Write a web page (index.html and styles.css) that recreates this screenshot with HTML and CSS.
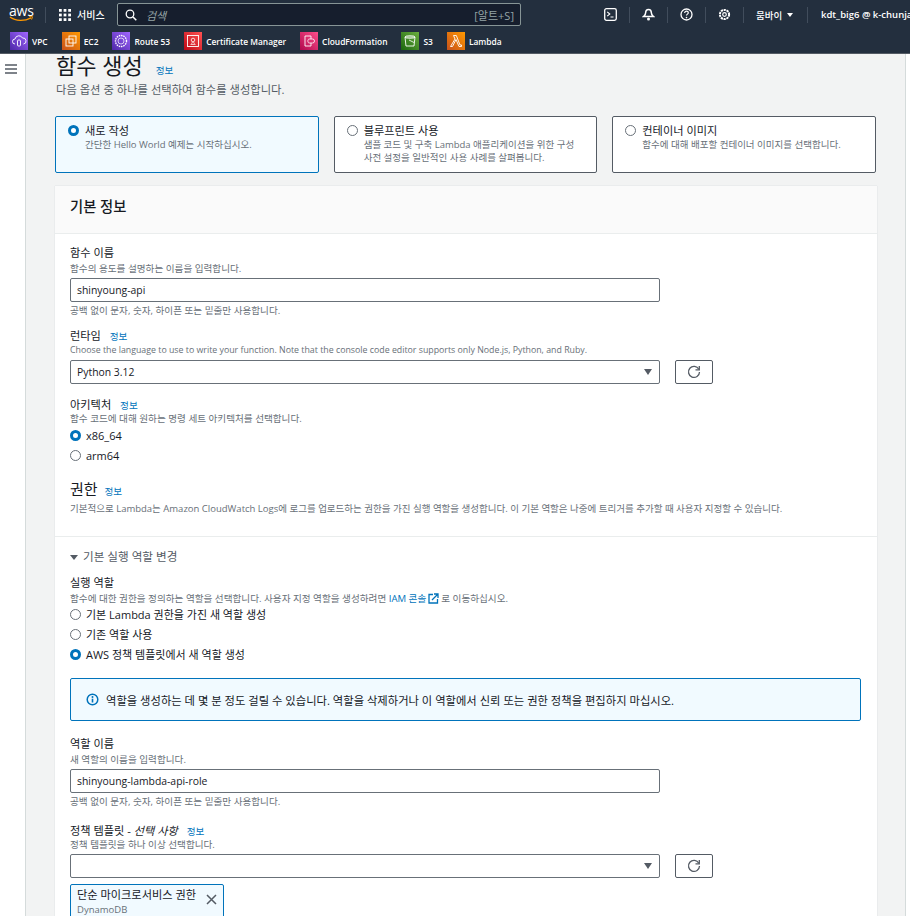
FILE: index.html
```html
<!DOCTYPE html>
<html lang="ko">
<head>
<meta charset="utf-8">
<title>함수 생성</title>
<link rel="stylesheet" href="styles.css">
</head>
<body>
<header class="console">
  <div class="topbar">
    <div class="logo"><span class="logo-text">aws</span><svg class="smile" viewBox="0 0 26 6" width="25" height="6"><path d="M1 1c6 4.500 15 4.500 22 .8" fill="none" stroke="#f90" stroke-width="1.300"/><path d="M21 .4l3.500 .2-1 3" fill="none" stroke="#f90" stroke-width="1"/></svg></div>
    <span class="sep logo-sep"></span>
    <div class="services">
      <svg class="grid-ic" viewBox="0 0 13 13" width="12" height="12"><g fill="#fff"><rect width="3" height="3"/><rect x="5" width="3" height="3"/><rect x="10" width="3" height="3"/><rect y="5" width="3" height="3"/><rect x="5" y="5" width="3" height="3"/><rect x="10" y="5" width="3" height="3"/><rect y="10" width="3" height="3"/><rect x="5" y="10" width="3" height="3"/><rect x="10" y="10" width="3" height="3"/></g></svg>
      <span>서비스</span>
    </div>
    <div class="search">
      <svg viewBox="0 0 12 12" width="12" height="12"><circle cx="5" cy="5" r="3.800" fill="none" stroke="#fff" stroke-width="1.300"/><path d="M8 8l3.300 3.300" stroke="#fff" stroke-width="1.500"/></svg>
      <em>검색</em>
      <span class="shortcut">[알트+S]</span>
    </div>
    <div class="tools">
      <span class="tool"><svg viewBox="0 0 13 13" width="13" height="13"><rect x=".7" y=".7" width="11.600" height="11.600" rx="1.800" fill="none" stroke="#fff" stroke-width="1.300"/><path d="M3.200 3.800L5.800 6 3.200 8.200" fill="none" stroke="#fff" stroke-width="1.100"/><path d="M6.500 9h3" stroke="#fff" stroke-width="1"/></svg></span>
      <span class="sep"></span>
      <span class="tool"><svg viewBox="0 0 13 13" width="13" height="13"><path d="M6.500 1.500c2 0 2.800 1.400 2.800 3.100 0 1.800 .8 3 2.200 4H1.500c1.400-1 2.200-2.200 2.200-4 0-1.700 .8-3.100 2.800-3.100z" fill="none" stroke="#fff" stroke-width="1.500"/><circle cx="6.500" cy="11" r="1.500" fill="#fff"/></svg></span>
      <span class="sep"></span>
      <span class="tool"><svg viewBox="0 0 13 13" width="13" height="13"><circle cx="6.500" cy="6.500" r="5.500" fill="none" stroke="#fff" stroke-width="1.300"/><path d="M4.700 5c0-1.200 .8-1.800 1.800-1.800s1.800 .7 1.800 1.600c0 1.300-1.800 1.400-1.800 2.800" fill="none" stroke="#fff" stroke-width="1.200"/><circle cx="6.500" cy="9.600" r=".8" fill="#fff"/></svg></span>
      <span class="sep"></span>
      <span class="tool"><svg viewBox="0 0 13 13" width="13" height="13"><circle cx="6.500" cy="6.500" r="4.600" fill="none" stroke="#fff" stroke-width="2" stroke-dasharray="2.200 .7"/><circle cx="6.500" cy="6.500" r="1.800" fill="none" stroke="#fff" stroke-width="1.200"/></svg></span>
      <span class="sep"></span>
      <span class="region">뭄바이<i class="caret"></i></span>
      <span class="sep"></span>
      <span class="account">kdt_big6 @ k-chunjae</span>
    </div>
  </div>
  <nav class="favorites">
    <span class="fav"><span class="svc purple"><svg viewBox="0 0 18 18" width="18" height="18"><path d="M5 12a2.500 2.500 0 0 1 0-5 4 4 0 0 1 7.500-1A3 3 0 0 1 13.500 12" fill="none" stroke="#fff" stroke-width=".9"/><rect x="7.500" y="8" width="3" height="6" rx="1" fill="none" stroke="#fff" stroke-width=".9"/></svg></span>VPC</span>
    <span class="fav"><span class="svc orange"><svg viewBox="0 0 18 18" width="18" height="18"><rect x="7" y="4" width="7" height="7" fill="none" stroke="#fff" stroke-width=".9"/><rect x="4" y="7" width="7" height="7" fill="none" stroke="#fff" stroke-width=".9"/></svg></span>EC2</span>
    <span class="fav"><span class="svc violet"><svg viewBox="0 0 18 18" width="18" height="18"><circle cx="9" cy="9" r="5.500" fill="none" stroke="#fff" stroke-width="1.400" stroke-dasharray="1.500 .8"/><circle cx="9" cy="9" r="3" fill="none" stroke="#fff" stroke-width=".7"/></svg></span>Route 53</span>
    <span class="fav"><span class="svc red"><svg viewBox="0 0 18 18" width="18" height="18"><rect x="3.500" y="3.500" width="11" height="11" fill="none" stroke="#fff" stroke-width=".9"/><circle cx="9" cy="8" r="1.800" fill="none" stroke="#fff" stroke-width=".8"/><path d="M6.500 12.500h5M7.500 12l1-2M10.500 12l-1-2" stroke="#fff" stroke-width=".7"/></svg></span>Certificate Manager</span>
    <span class="fav"><span class="svc pink"><svg viewBox="0 0 18 18" width="18" height="18"><path d="M5 4h6v3M5 4v10h6v-3" fill="none" stroke="#fff" stroke-width=".9"/><path d="M8 9a1.500 1.500 0 0 1 1.500-2h3a2 2 0 0 1 0 4H9.500A1.500 1.500 0 0 1 8 9z" fill="none" stroke="#fff" stroke-width=".8"/></svg></span>CloudFormation</span>
    <span class="fav"><span class="svc green"><svg viewBox="0 0 18 18" width="18" height="18"><path d="M4 5h10l-1 9H5z" fill="none" stroke="#fff" stroke-width=".9"/><ellipse cx="9" cy="5" rx="5" ry="1.300" fill="none" stroke="#fff" stroke-width=".8"/><path d="M8 8l5 2.500" stroke="#fff" stroke-width=".8"/></svg></span>S3</span>
    <span class="fav"><span class="svc amber"><svg viewBox="0 0 18 18" width="18" height="18"><path d="M3.500 14.500L8 7 6.500 3.500h2.800L13 13h1.500v1.500h-2.500L9 7.500 5.500 14.500z" fill="none" stroke="#fff" stroke-width=".9"/></svg></span>Lambda</span>
  </nav>
</header>

<div class="layout">
  <aside class="side">
    <svg viewBox="0 0 12 10" width="12" height="10"><path d="M0 1h12M0 5h12M0 9h12" stroke="#545b64" stroke-width="1.500"/></svg>
  </aside>

  <main class="main">
    <div class="title-row">
      <h1>함수 생성</h1><a class="info">정보</a>
    </div>
    <p class="lead">다음 옵션 중 하나를 선택하여 함수를 생성합니다.</p>

    <div class="choices">
      <div class="choice selected">
        <span class="radio on"></span>
        <div><div class="choice-title">새로 작성</div><div class="desc">간단한 Hello World 예제는 시작하십시오.</div></div>
      </div>
      <div class="choice">
        <span class="radio"></span>
        <div><div class="choice-title">블루프린트 사용</div><div class="desc">샘플 코드 및 구축 Lambda 애플리케이션을 위한 구성<br>사전 설정을 일반적인 사용 사례를 살펴봅니다.</div></div>
      </div>
      <div class="choice">
        <span class="radio"></span>
        <div><div class="choice-title">컨테이너 이미지</div><div class="desc">함수에 대해 배포할 컨테이너 이미지를 선택합니다.</div></div>
      </div>
    </div>

    <section class="panel">
      <div class="panel-head"><h2>기본 정보</h2></div>

      <div class="panel-body top-body">
        <div class="field">
          <div class="label">함수 이름</div>
          <div class="desc">함수의 용도를 설명하는 이름을 입력합니다.</div>
          <div class="input">shinyoung-api</div>
          <div class="desc hint">공백 없이 문자, 숫자, 하이픈 또는 밑줄만 사용합니다.</div>
        </div>
        <div class="field runtime">
          <div class="label">런타임 <a class="info">정보</a></div>
          <div class="desc desc-en">Choose the language to use to write your function. Note that the console code editor supports only Node.js, Python, and Ruby.</div>
          <div class="select-row">
            <div class="input select">Python 3.12<i class="tri"></i></div>
            <button class="refresh" type="button"><svg viewBox="0 0 14 14" width="14" height="14"><path d="M11.800 4.200A5.500 5.500 0 1 0 12.500 7" fill="none" stroke="#545b64" stroke-width="1.300"/><path d="M12.300 1v3.800H8.500" fill="none" stroke="#545b64" stroke-width="1.300"/></svg></button>
          </div>
        </div>
        <div class="field arch">
          <div class="label">아키텍처 <a class="info">정보</a></div>
          <div class="desc">함수 코드에 대해 원하는 명령 세트 아키텍처를 선택합니다.</div>
          <div class="radios arch-radios">
            <div class="opt"><span class="radio on"></span>x86_64</div>
            <div class="opt"><span class="radio"></span>arm64</div>
          </div>
        </div>
        <div class="perm">
          <h3>권한 <a class="info">정보</a></h3>
          <div class="desc">기본적으로 Lambda는 Amazon CloudWatch Logs에 로그를 업로드하는 권한을 가진 실행 역할을 생성합니다. 이 기본 역할은 나중에 트리거를 추가할 때 사용자 지정할 수 있습니다.</div>
        </div>
      </div>

      <div class="panel-body role-body">
        <div class="expander"><i class="tri"></i>기본 실행 역할 변경</div>
        <div class="field exec">
          <div class="label">실행 역할</div>
          <div class="desc">함수에 대한 권한을 정의하는 역할을 선택합니다. 사용자 지정 역할을 생성하려면 <a class="link">IAM 콘솔</a><svg class="ext" viewBox="0 0 11 11" width="11" height="11"><path d="M5 1.500H1v8.500h8.500V6" fill="none" stroke="#0073bb" stroke-width="1.300"/><path d="M4 7l5.500-5.500M6 1h4v4" fill="none" stroke="#0073bb" stroke-width="1.300"/></svg>로 이동하십시오.</div>
          <div class="radios exec-radios">
            <div class="opt"><span class="radio"></span>기본 Lambda 권한을 가진 새 역할 생성</div>
            <div class="opt"><span class="radio"></span>기존 역할 사용</div>
            <div class="opt"><span class="radio on"></span>AWS 정책 템플릿에서 새 역할 생성</div>
          </div>
        </div>
        <div class="alert">
          <svg viewBox="0 0 13 13" width="13" height="13"><circle cx="6.500" cy="6.500" r="5.300" fill="none" stroke="#0073bb" stroke-width="1.500"/><circle cx="6.500" cy="4" r="1" fill="#0073bb"/><rect x="5.700" y="5.700" width="1.600" height="3.800" fill="#0073bb"/></svg>
          <span>역할을 생성하는 데 몇 분 정도 걸릴 수 있습니다. 역할을 삭제하거나 이 역할에서 신뢰 또는 권한 정책을 편집하지 마십시오.</span>
        </div>
        <div class="field role-name">
          <div class="label">역할 이름</div>
          <div class="desc">새 역할의 이름을 입력합니다.</div>
          <div class="input">shinyoung-lambda-api-role</div>
          <div class="desc hint">공백 없이 문자, 숫자, 하이픈 또는 밑줄만 사용합니다.</div>
        </div>
        <div class="field policy">
          <div class="label">정책 템플릿 - <em>선택 사항</em> <a class="info">정보</a></div>
          <div class="desc">정책 템플릿을 하나 이상 선택합니다.</div>
          <div class="select-row">
            <div class="input select"><i class="tri"></i></div>
            <button class="refresh" type="button"><svg viewBox="0 0 14 14" width="14" height="14"><path d="M11.800 4.200A5.500 5.500 0 1 0 12.500 7" fill="none" stroke="#545b64" stroke-width="1.300"/><path d="M12.300 1v3.800H8.500" fill="none" stroke="#545b64" stroke-width="1.300"/></svg></button>
          </div>
          <div class="chip">
            <div><div class="chip-title">단순 마이크로서비스 권한</div><div class="chip-sub">DynamoDB</div></div>
            <svg viewBox="0 0 11 11" width="11" height="11"><path d="M1 1l9 9M10 1l-9 9" stroke="#545b64" stroke-width="1.500"/></svg>
          </div>
        </div>
      </div>
    </section>
  </main>
  <div class="rail"></div>
</div>
</body>
</html>
```
FILE: styles.css
```css
* { box-sizing: border-box; }
html, body { margin: 0; height: 916px; overflow: hidden; }
body {
  font-family: "Open Sans", "Noto Sans CJK KR", sans-serif;
  font-size: 11px;
  color: #16191f;
  background: #f2f3f3;
  display: flex;
  flex-direction: column;
}
a { color: #0073bb; }

.console { background: #232f3e; height: 54px; flex: none; border-bottom: 1px solid #545b64; color: #fff; }
.topbar { height: 29px; display: flex; align-items: center; }
.logo { width: 45px; padding-left: 9px; display: flex; flex-direction: column; height: 24px; }
.logo-text { font-size: 14px; line-height: 15px; letter-spacing: -.2px; }
.smile { margin-top: -2px; }
.sep { width: 1px; height: 16px; background: #414d5c; flex: none; }
.services { display: flex; align-items: center; gap: 6px; padding-left: 13px; width: 71px; font-size: 10px; font-weight: 500; white-space: nowrap; }
.search { width: 404px; height: 23px; background: #161e2d; border: 1px solid #879596; border-radius: 2px; display: flex; align-items: center; padding-left: 7px; font-size: 11px; color: #95a5a6; flex: none; }
.search em { margin-left: 9px; }
.shortcut { margin-left: auto; padding-right: 6px; }
.tools { margin-left: 71px; flex: 1; min-width: 0; display: flex; align-items: center; white-space: nowrap; overflow: hidden; }
.tool { width: 37px; flex: none; display: flex; justify-content: center; }
.region { width: 63px; flex: none; padding-left: 12px; font-size: 9.500px; font-weight: 500; display: flex; align-items: center; gap: 5px; }
.caret { width: 0; height: 0; border: 3px solid transparent; border-top: 4px solid #fff; border-bottom: 0; }
.account { padding-left: 13px; font-size: 9.500px; font-weight: 600; }

.favorites { height: 24px; display: flex; align-items: center; padding-left: 10px; gap: 14px; font-size: 8.400px; font-weight: 600; }
.fav { display: flex; align-items: center; gap: 4px; white-space: nowrap; }
.svc { width: 18px; height: 18px; display: block; }
.svc svg { display: block; }
.purple { background: linear-gradient(45deg, #4d27a8, #a166ff); }
.orange { background: linear-gradient(45deg, #c8511b, #f90); }
.violet { background: linear-gradient(45deg, #4d27a8, #a166ff); }
.red { background: linear-gradient(45deg, #bd0816, #ff5252); }
.pink { background: linear-gradient(45deg, #b0084d, #ff4f8b); }
.green { background: linear-gradient(45deg, #1b660f, #6cae3e); }
.amber { background: linear-gradient(45deg, #c8511b, #f90); }

.layout { flex: 1; display: flex; min-height: 0; overflow: hidden; }
.side { width: 26px; flex: none; background: #fff; border-right: 1px solid #d5dbdb; padding: 10px 0 0 5px; }
.side svg { display: block; }
.main { flex: 1; min-width: 0; padding: 0 29px; overflow: hidden; }
.rail { width: 5px; flex: none; background: #fff; border-left: 1px solid #d5dbdb; }

.title-row { display: flex; align-items: baseline; height: 25px; margin-top: -1px; }
h1 { font-size: 22px; font-weight: 400; margin: 0 13px 0 1px; line-height: 25px; }
.info { font-size: 9.600px; font-weight: 400; color: #0073bb; }
.lead { margin: 5px 0 0 1px; font-size: 11.300px; line-height: 14px; color: #545b64; }

.choices { display: grid; grid-template-columns: repeat(3, 1fr); gap: 15px; margin-top: 19px; }
.choice { height: 57px; background: #fff; border: 1px solid #545b64; border-radius: 2px; padding: 6px 12px; display: flex; gap: 6px; }
.choice.selected { background: #f1faff; border-color: #0073bb; }
.choice-title { font-size: 11.200px; line-height: 15px; }
.desc { font-size: 9.600px; line-height: 13px; color: #687078; white-space: nowrap; }
.desc-en { font-size: 8.800px; }
.choice .desc, .perm .desc { font-size: 9.500px; }
.radio { width: 11px; height: 11px; border-radius: 50%; border: 1px solid #687078; background: #fff; flex: none; display: block; margin-top: 2px; }
.radio.on { border: 3.500px solid #0073bb; }

.panel { margin-top: 13px; background: #fff; box-shadow: 0 0 1px 0 #c4c9cc; width: 822px; }
.panel-head { height: 48px; background: #fafafa; border-bottom: 1px solid #eaeded; padding: 11px 15px; }
h2 { margin: 0; font-size: 14.300px; font-weight: 500; line-height: 20px; }
.panel-body { padding: 0 16px 0 15px; }
.top-body { padding-top: 11px; height: 303px; border-bottom: 1px solid #eaeded; }
.label { font-size: 11.200px; line-height: 16px; margin-bottom: 1px; }
.label em { font-style: italic; }
.label .info { margin-left: 6px; }
.input { width: 590px; height: 24px; border: 1px solid #687078; border-radius: 2px; background: #fff; padding: 0 6px; font-size: 10.400px; line-height: 22px; color: #16191f; margin-top: 3px; }
.hint { margin-top: 2px; }
.runtime { margin-top: 11px; }
.runtime .label { margin-bottom: -1px; }
.arch .label, .policy .label { margin-bottom: -2px; }
.select-row { display: flex; gap: 15px; margin-top: 3px; }
.select-row .input { margin-top: 0; }
.select { display: flex; align-items: center; justify-content: space-between; padding-right: 7px; }
.select .tri { margin-left: auto; }
.tri { display: block; width: 0; height: 0; border: 4px solid transparent; border-top: 6px solid #545b64; border-bottom: 0; }
.refresh { width: 38px; height: 24px; background: #fff; border: 1px solid #545b64; border-radius: 2px; padding: 0; display: flex; align-items: center; justify-content: center; }
.arch { margin-top: 13px; }
.radios { display: flex; flex-direction: column; }
.opt { display: flex; align-items: center; gap: 5px; font-size: 11px; color: #16191f; height: 20px; white-space: nowrap; }
.opt .radio { margin: 0; }
.arch-radios { margin-top: 0; }
.perm { margin-top: 15px; }
h3 { margin: 0 0 1px; font-size: 15px; font-weight: 400; line-height: 18px; }
.perm .info { margin-left: 3px; }
.role-body { padding-top: 12px; }
.expander { display: flex; align-items: center; gap: 5px; font-size: 11.600px; line-height: 16px; color: #545b64; }
.expander .tri { border-width: 4px; border-top-width: 5px; }
.exec { margin-top: 10px; }
.link { color: #0073bb; }
.ext { vertical-align: -2px; margin: 0 2px; }
.exec-radios { margin-top: -1px; }
.alert { width: 791px; height: 43px; margin-top: 14px; background: #f1faff; border: 1px solid #0073bb; border-radius: 2px; display: flex; align-items: center; gap: 7px; padding-left: 15px; font-size: 11.300px; color: #16191f; white-space: nowrap; }
.role-name { margin-top: 15px; }
.policy { margin-top: 15px; }
.chip { width: 154px; height: 40px; margin-top: 6px; background: #f1faff; border: 1px solid #0073bb; border-radius: 2px; padding: 2px 6px; display: flex; justify-content: space-between; align-items: flex-start; }
.chip svg { margin-top: 7px; }
.chip-title { font-size: 11.200px; line-height: 16px; white-space: nowrap; }
.chip-sub { font-size: 9.500px; line-height: 14px; color: #687078; }
```
